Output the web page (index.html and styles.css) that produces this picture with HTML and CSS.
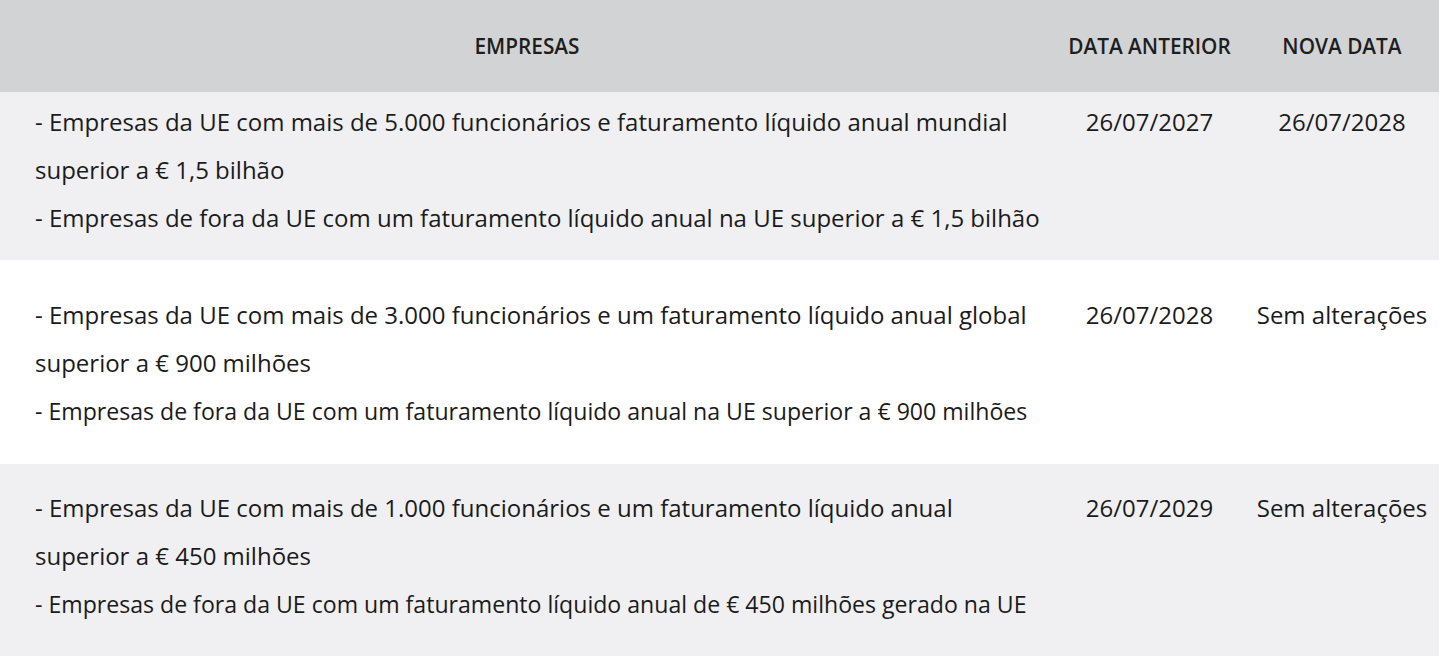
FILE: index.html
```html
<!DOCTYPE html>
<html lang="pt">
<head>
<meta charset="utf-8">
<link rel="stylesheet" href="styles.css">
</head>
<body>
<table class="deadlines">
  <colgroup>
    <col class="col-companies">
    <col class="col-old">
    <col class="col-new">
  </colgroup>
  <thead>
    <tr class="head-row">
      <th>EMPRESAS</th>
      <th>DATA ANTERIOR</th>
      <th>NOVA DATA</th>
    </tr>
  </thead>
  <tbody>
    <tr class="row row-shaded row-1">
      <td class="companies">
        <div class="item">- Empresas da UE com mais de 5.000 funcionários e faturamento líquido anual mundial superior a € 1,5 bilhão</div>
        <div class="item">- Empresas de fora da UE com um faturamento líquido anual na UE superior a € 1,5 bilhão</div>
      </td>
      <td class="date">26/07/2027</td>
      <td class="date">26/07/2028</td>
    </tr>
    <tr class="row row-plain row-2">
      <td class="companies">
        <div class="item">- Empresas da UE com mais de 3.000 funcionários e um faturamento líquido anual global superior a € 900 milhões</div>
        <div class="item item-small">- Empresas de fora da UE com um faturamento líquido anual na UE superior a € 900 milhões</div>
      </td>
      <td class="date">26/07/2028</td>
      <td class="date">Sem alterações</td>
    </tr>
    <tr class="row row-shaded row-3">
      <td class="companies">
        <div class="item">- Empresas da UE com mais de 1.000 funcionários e um faturamento líquido anual superior a € 450 milhões</div>
        <div class="item item-small">- Empresas de fora da UE com um faturamento líquido anual de € 450 milhões gerado na UE</div>
      </td>
      <td class="date">26/07/2029</td>
      <td class="date">Sem alterações</td>
    </tr>
  </tbody>
</table>
</body>
</html>
```

FILE: styles.css
```css
html, body {
  margin: 0;
  padding: 0;
  background: #ffffff;
}
body {
  font-family: "Open Sans", "Noto Sans", sans-serif;
  color: #1b1b1b;
}
.deadlines {
  width: 1439px;
  border-collapse: collapse;
  table-layout: fixed;
}
.col-companies { width: 1054px; }
.col-old { width: 191px; }
.col-new { width: 194px; }

.head-row {
  background: #d2d3d5;
  height: 92px;
}
.head-row th {
  font-size: 20.8px;
  font-weight: 600;
  text-align: center;
  vertical-align: middle;
  padding: 0;
  color: #1e1e1e;
}
.row td {
  font-size: 24px;
  line-height: 48px;
  vertical-align: top;
  padding: 0;
}
.row-shaded { background: #f0f0f2; }
.row-plain { background: #ffffff; }

.row td.companies {
  padding-left: 35px;
  padding-right: 9px;
}
.item-small {
  font-size: 23.1px;
}
.date {
  text-align: center;
  white-space: nowrap;
}
.row-1 td { padding-top: 6px; padding-bottom: 18px; }
.row-2 td { padding-top: 31px; padding-bottom: 29px; }
.row-3 td { padding-top: 20px; padding-bottom: 28px; }
```
